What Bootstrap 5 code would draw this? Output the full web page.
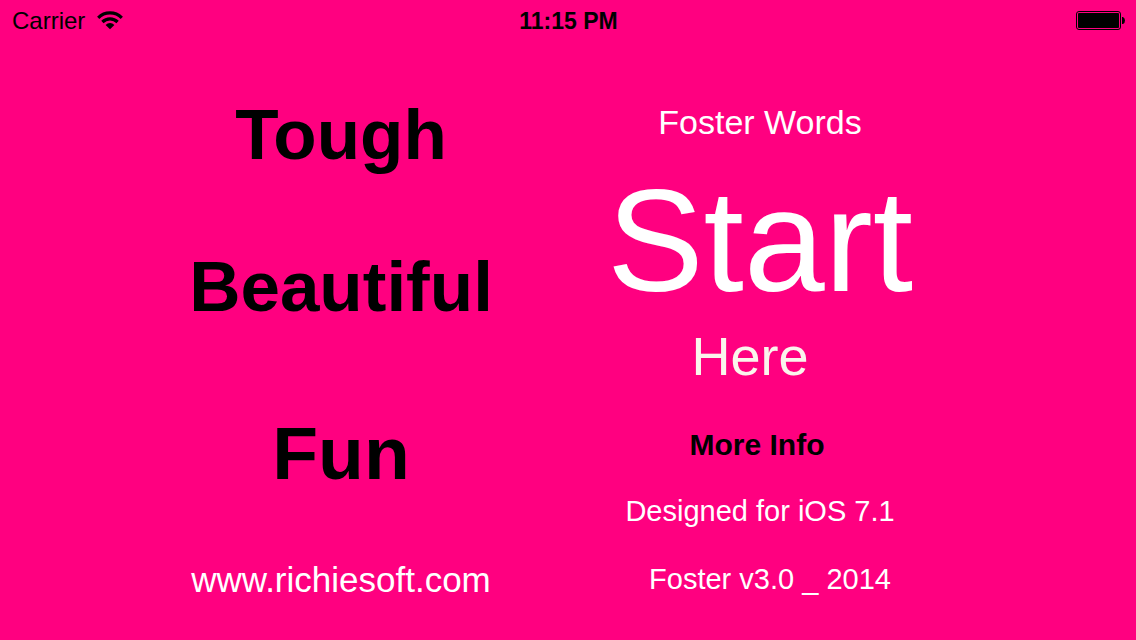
<!DOCTYPE html>
<html lang="en">
<head>
<meta charset="utf-8">
<meta name="viewport" content="width=device-width, initial-scale=1">
<title>Foster Words</title>
<link rel="stylesheet" href="https://cdn.jsdelivr.net/npm/bootstrap@5.3.0/dist/css/bootstrap.min.css">
<style>
  body { background: #ff0080; color: #fff; font-family: "Liberation Sans", Arial, sans-serif; }
  .status-bar { color: #000; font-size: 24px; line-height: 42px; padding: 0 11px 0 12px; }
  .status-time { font-size: 23px; }
  .carrier-group { gap: 12px; }
  .menu-area { padding: 53px 35px 0 0; }
  .menu-columns { max-width: 838px; }
  .plain-btn { background: none; border: 0; padding: 0; color: inherit; }
  .word-btn { color: #000; font-weight: 700; font-size: 71px; line-height: 80px; margin-bottom: 72px; }
  .word-last { font-size: 75px; line-height: 88px; margin: 10px 0 63px; }
  .site-name { font-size: 35px; line-height: 40px; }
  .app-title { font-size: 34px; line-height: 40px; margin: 7px 0 27px; }
  .start-btn { font-size: 145px; line-height: 144px; margin-bottom: 11px; }
  .here-text { font-size: 54px; line-height: 64px; color: #faf5ec; margin-bottom: 37px; padding-right: 20px; }
  .info-btn { color: #000; font-weight: 700; font-size: 30px; line-height: 40px; margin-bottom: 26px; padding-right: 6px; }
  .note-text { font-size: 29px; line-height: 40px; margin-bottom: 28px; }
  .version-text { padding-left: 20px; }
</style>
</head>
<body>
<header class="status-bar row g-0 align-items-center">
  <div class="col d-flex align-items-center carrier-group">
    <span>Carrier</span>
    <svg width="26" height="20" viewBox="0 0 26 20" aria-label="Wi-Fi">
      <g fill="none" stroke="#000" stroke-width="3.2">
        <path d="M1.2 6.8A16.6 16.6 0 0 1 24.8 6.8"/>
        <path d="M5.4 11A10.7 10.7 0 0 1 20.6 11"/>
      </g>
      <path d="M8.6 13.9A6.2 6.2 0 0 1 17.4 13.9L13 18.2Z"/>
    </svg>
  </div>
  <div class="col-auto fw-bold status-time">11:15 PM</div>
  <div class="col d-flex justify-content-end">
    <svg width="49" height="20" viewBox="0 0 49 20" aria-label="Battery full">
      <rect x=".5" y=".5" width="44" height="18" rx="2.5" fill="none" stroke="#000"/>
      <rect x="2" y="2" width="41" height="15" rx="1"/>
      <path d="M46 6h1q2 1 2 3.5T47 13h-1z"/>
    </svg>
  </div>
</header>

<main class="menu-area">
  <div class="menu-columns row g-0 mx-auto text-nowrap">
    <div class="col-6 d-flex flex-column align-items-center">
      <button type="button" class="plain-btn word-btn">Tough</button>
      <button type="button" class="plain-btn word-btn">Beautiful</button>
      <button type="button" class="plain-btn word-btn word-last">Fun</button>
      <div class="site-name">www.richiesoft.com</div>
    </div>
    <div class="col-6 d-flex flex-column align-items-center">
      <h1 class="app-title fw-normal">Foster Words</h1>
      <button type="button" class="plain-btn start-btn">Start</button>
      <div class="here-text">Here</div>
      <button type="button" class="plain-btn info-btn">More Info</button>
      <div class="note-text">Designed for iOS 7.1</div>
      <div class="note-text version-text mb-0">Foster v3.0 _ 2014</div>
    </div>
  </div>
</main>
<script src="https://cdn.jsdelivr.net/npm/bootstrap@5.3.0/dist/js/bootstrap.bundle.min.js"></script>
</body>
</html>
